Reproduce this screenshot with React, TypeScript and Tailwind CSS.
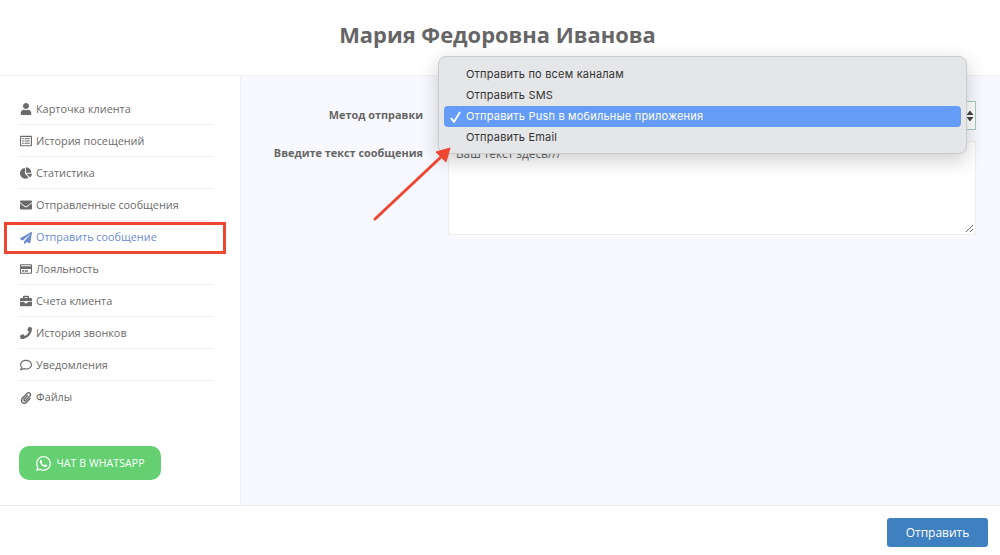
import { FaUser, FaRegListAlt, FaChartPie, FaEnvelope, FaPaperPlane, FaRegCreditCard, FaBriefcase, FaPhone, FaRegComment, FaPaperclip, FaWhatsapp } from "react-icons/fa";

const items = [
  { t: "Карточка клиента", I: FaUser },
  { t: "История посещений", I: FaRegListAlt },
  { t: "Статистика", I: FaChartPie },
  { t: "Отправленные сообщения", I: FaEnvelope },
  { t: "Отправить сообщение", I: FaPaperPlane, active: true },
  { t: "Лояльность", I: FaRegCreditCard },
  { t: "Счета клиента", I: FaBriefcase },
  { t: "История звонков", I: FaPhone },
  { t: "Уведомления", I: FaRegComment },
  { t: "Файлы", I: FaPaperclip },
];

const menu = ["Отправить по всем каналам", "Отправить SMS", "Отправить Push в мобильные приложения", "Отправить Email"];

export default function App() {
  return (
    <div className="relative w-[1000px] h-[555px] overflow-hidden bg-white flex flex-col text-[#6b6b6b] font-['Open_Sans',sans-serif]">
      <header className="h-[76px] shrink-0 border-b border-[#f0f1f4] flex items-center justify-center pb-[6px]">
        <h1 className="text-[21.9px] font-bold text-[#666666] leading-none pr-[5px]">Мария Федоровна Иванова</h1>
      </header>
      <div className="flex flex-1 min-h-0">
        <aside className="w-[241px] shrink-0 border-r border-[#eeeff3] pl-[19px] pt-[17px] pr-[26px] flex flex-col">
          <nav className="flex flex-col">
            {items.map(({ t, I, active }, i) => (
              <div key={t} className={"h-[32px] flex items-center gap-[4px] text-[10.85px] pl-[1px] pt-[1px] " + (i < 9 && !active ? "border-b border-[#f0f0f0] " : "") + (active ? "text-[#6d8bd0]" : "text-[#6b6b6b]")}>
                <span className="w-[12px] flex justify-center"><I className="w-[12px] h-[12px]" /></span>
                <span>{t}</span>
              </div>
            ))}
          </nav>
          <button className="mt-[33px] w-[142px] h-[34px] rounded-[10px] bg-[#64d071] text-white flex items-center justify-center gap-[4px] text-[10.5px] tracking-[0.1px]">
            <FaWhatsapp className="w-[17px] h-[17px]" />
            <span className="pt-[1px]">ЧАТ В WHATSAPP</span>
          </button>
        </aside>
        <main className="flex-1 bg-[#f8f9fe] pt-[25px] pl-[32px] pr-[24px]">
          <div className="flex items-center gap-[25px] h-[29px]">
            <label className="w-[150px] text-right text-[10.9px] font-bold text-[#666666]">Метод отправки</label>
            <div className="flex-1 h-[29px] bg-white border border-[#a5cfc0] flex items-center justify-end pr-[1px] text-[#444]">
              <svg width="8" height="12" viewBox="0 0 8 12" fill="currentColor"><path d="M4 0.5 7.5 5H.5zM4 11.5.5 7h7z" /></svg>
            </div>
          </div>
          <div className="flex gap-[25px] mt-[11px]">
            <label className="w-[150px] text-right text-[10.9px] font-bold text-[#666666] whitespace-nowrap pt-[4px] flex justify-end">Введите текст сообщения</label>
            <div className="relative flex-1 h-[94px] bg-white border border-[#eeeeee] pl-[7px] pt-[3px] text-[11.8px] text-[#666]">
              Ваш текст здесь///
              <svg className="absolute right-[1px] bottom-[1px]" width="9" height="9" viewBox="0 0 9 9" stroke="#666" strokeWidth="1"><path d="M1 8 8 1M5 8 8 5" /></svg>
            </div>
          </div>
        </main>
      </div>
      <footer className="h-[50px] shrink-0 border-t border-[#e9eaf0] flex justify-end items-start pt-[12px] pr-[12px]">
        <button className="w-[101px] h-[29px] rounded-[3px] bg-[#3f80c1] text-white text-[12px]">Отправить</button>
      </footer>

      <div className="absolute left-[4px] top-[222px] w-[222px] h-[32px] border-[3px] border-[#ef4632]" />

      <div className="absolute left-[438px] top-[56px] w-[529px] h-[98px] rounded-[8px] bg-[#e5e6e8] border border-[#c9cacc] shadow-[0_6px_20px_rgba(0,0,0,0.2)] px-[5px] pt-[7px] font-['Inter',sans-serif] text-[11px] tracking-[0.2px] text-[#333333]">
        {menu.map((m, i) => (
          <div key={m} className={"relative h-[21px] flex items-center pl-[22px] rounded-[4px] " + (i === 2 ? "bg-[#659cf7] text-white" : "")}>
            {i === 2 && (
              <svg className="absolute left-[6px] top-[5px]" width="11" height="12" viewBox="0 0 11 12" fill="none" stroke="#fff" strokeWidth="1.8"><path d="M1 7 4 11 10 1" /></svg>
            )}
            {m}
          </div>
        ))}
      </div>

      <svg className="absolute left-[370px] top-[145px]" width="85" height="80" viewBox="0 0 85 80" fill="none">
        <path d="M5 74 71 12" stroke="#ef4632" strokeWidth="3" strokeLinecap="round" />
        <path d="M80 3 66 7 76 17z" fill="#ef4632" stroke="#ef4632" strokeWidth="1" strokeLinejoin="round" />
      </svg>
    </div>
  );
}
